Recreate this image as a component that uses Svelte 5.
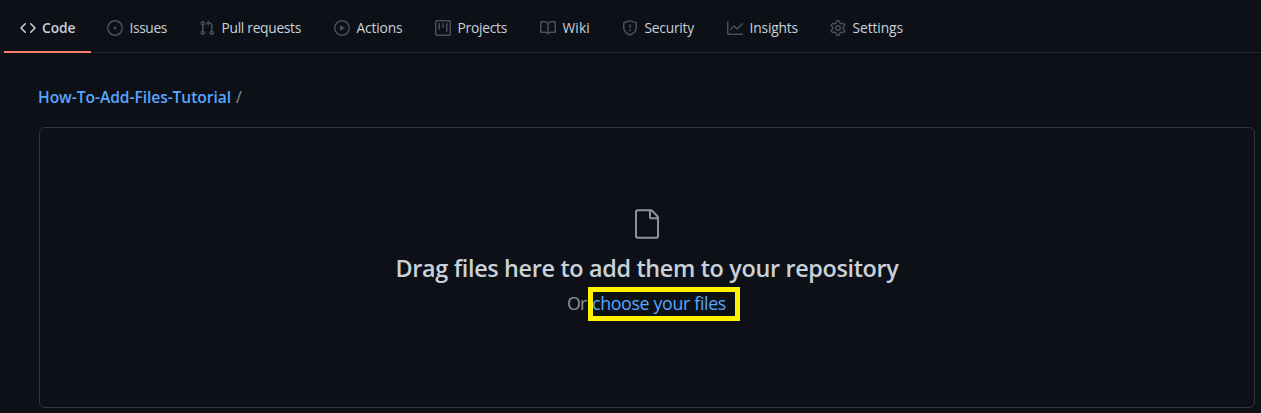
<script>
  const tabs = [
    { label: 'Code', width: 87, text: 33.5, active: true, paths: ['M4.72 3.22a.75.75 0 0 1 1.06 1.06L2.06 8l3.72 3.72a.75.75 0 1 1-1.06 1.06L.47 8.53a.75.75 0 0 1 0-1.06l4.25-4.25zm6.56 0a.75.75 0 1 0-1.06 1.06L13.94 8l-3.72 3.72a.75.75 0 1 0 1.06 1.06l4.25-4.25a.75.75 0 0 0 0-1.06l-4.25-4.25z'] },
    { label: 'Issues', width: 92, text: 37.5, paths: ['M8 9.5a1.5 1.5 0 1 0 0-3 1.5 1.5 0 0 0 0 3z', 'M8 0a8 8 0 1 0 0 16A8 8 0 0 0 8 0zM1.5 8a6.5 6.5 0 1 1 13 0 6.5 6.5 0 0 1-13 0z'] },
    { label: 'Pull requests', width: 135, text: 79.5, paths: ['M7.177 3.073L9.573.677A.25.25 0 0 1 10 .854v4.792a.25.25 0 0 1-.427.177L7.177 3.427a.25.25 0 0 1 0-.354zM3.75 2.5a.75.75 0 1 0 0 1.5.75.75 0 0 0 0-1.5zm-2.25.75a2.25 2.25 0 1 1 3 2.122v5.256a2.251 2.251 0 1 1-1.5 0V5.372A2.25 2.25 0 0 1 1.5 3.25zM11 2.5h-1V4h1a1 1 0 0 1 1 1v5.628a2.251 2.251 0 1 0 1.5 0V5A2.5 2.5 0 0 0 11 2.5zm1 10.25a.75.75 0 1 1 1.5 0 .75.75 0 0 1-1.5 0zM3.75 12a.75.75 0 1 0 0 1.5.75.75 0 0 0 0-1.5z'] },
    { label: 'Actions', width: 101, text: 46, paths: ['M1.5 8a6.5 6.5 0 1 1 13 0 6.5 6.5 0 0 1-13 0zM8 0a8 8 0 1 0 0 16A8 8 0 0 0 8 0zM6.379 5.227A.25.25 0 0 0 6 5.442v5.117a.25.25 0 0 0 .379.214l4.264-2.559a.25.25 0 0 0 0-.428L6.379 5.227z'] },
    { label: 'Projects', width: 105, text: 49.5, paths: ['M1.75 0A1.75 1.75 0 0 0 0 1.75v12.5C0 15.216.784 16 1.75 16h12.5A1.75 1.75 0 0 0 16 14.25V1.75A1.75 1.75 0 0 0 14.25 0H1.75zM1.5 1.75a.25.25 0 0 1 .25-.25h12.5a.25.25 0 0 1 .25.25v12.5a.25.25 0 0 1-.25.25H1.75a.25.25 0 0 1-.25-.25V1.75zM11.75 3a.75.75 0 0 0-.75.75v7.5a.75.75 0 0 0 1.5 0v-7.5a.75.75 0 0 0-.75-.75zm-8.25.75a.75.75 0 0 1 1.5 0v5.5a.75.75 0 0 1-1.5 0v-5.5zM8 3a.75.75 0 0 0-.75.75v3.5a.75.75 0 0 0 1.5 0v-3.5A.75.75 0 0 0 8 3z'] },
    { label: 'Wiki', width: 82, text: 27.5, paths: ['M0 1.75A.75.75 0 0 1 .75 1h4.253c1.227 0 2.317.59 3 1.501A3.744 3.744 0 0 1 11.006 1h4.245a.75.75 0 0 1 .75.75v10.5a.75.75 0 0 1-.75.75h-4.507a2.25 2.25 0 0 0-1.591.659l-.622.621a.75.75 0 0 1-1.06 0l-.622-.621A2.25 2.25 0 0 0 5.258 13H.75a.75.75 0 0 1-.75-.75V1.75zm8.755 3a2.25 2.25 0 0 1 2.25-2.25H14.5v9h-3.757c-.71 0-1.4.201-1.992.572l.004-7.322zm-1.504 7.324l.004-5.073-.002-2.253A2.25 2.25 0 0 0 5.003 2.5H1.5v9h3.757a3.75 3.75 0 0 1 1.994.574z'] },
    { label: 'Security', width: 105, text: 49.5, paths: ['M7.467.133a1.75 1.75 0 0 1 1.066 0l5.25 1.68A1.75 1.75 0 0 1 15 3.48V7c0 1.566-.32 3.182-1.303 4.682-.983 1.498-2.585 2.813-5.032 3.855a1.7 1.7 0 0 1-1.33 0c-2.447-1.042-4.049-2.357-5.032-3.855C1.32 10.182 1 8.566 1 7V3.48a1.75 1.75 0 0 1 1.217-1.667l5.25-1.68zm.61 1.429a.25.25 0 0 0-.153 0l-5.25 1.68a.25.25 0 0 0-.174.238V7c0 1.358.275 2.666 1.057 3.86.784 1.194 2.121 2.34 4.366 3.297a.2.2 0 0 0 .154 0c2.245-.956 3.582-2.104 4.366-3.298C13.225 9.666 13.5 8.36 13.5 7V3.48a.25.25 0 0 0-.174-.237l-5.25-1.68zM9 10.5a1 1 0 1 1-2 0 1 1 0 0 1 2 0zm-.25-5.75a.75.75 0 1 0-1.5 0v3a.75.75 0 0 0 1.5 0v-3z'] },
    { label: 'Insights', width: 103, text: 48.5, paths: ['M1.5 1.75a.75.75 0 0 0-1.5 0v12.5c0 .414.336.75.75.75h14.5a.75.75 0 0 0 0-1.5H1.5V1.75zm14.28 2.53a.75.75 0 0 0-1.06-1.06L10 7.94 7.53 5.47a.75.75 0 0 0-1.06 0L3.22 8.72a.75.75 0 0 0 1.06 1.06L7 7.06l2.47 2.47a.75.75 0 0 0 1.06 0l5.25-5.25z'] },
    { label: 'Settings', width: 106, text: 50.5, paths: ['M7.429 1.525a6.593 6.593 0 0 1 1.142 0c.036.003.108.036.137.146l.289 1.105c.147.56.55.967.997 1.189.174.086.341.183.501.29.417.278.97.423 1.53.27l1.102-.303c.11-.03.175.016.195.046.219.31.41.641.573.989.014.031.022.11-.059.19l-.815.806c-.411.406-.562.957-.53 1.456a4.588 4.588 0 0 1 0 .582c-.032.499.119 1.05.53 1.456l.815.806c.08.08.073.159.059.19a6.494 6.494 0 0 1-.573.99c-.02.029-.086.074-.195.045l-1.103-.303c-.559-.153-1.112-.008-1.529.27-.16.107-.327.204-.5.29-.449.222-.851.628-.998 1.189l-.289 1.105c-.029.11-.101.143-.137.146a6.613 6.613 0 0 1-1.142 0c-.036-.003-.108-.037-.137-.146l-.289-1.105c-.147-.56-.55-.967-.997-1.189a4.502 4.502 0 0 1-.501-.29c-.417-.278-.97-.423-1.53-.27l-1.102.303c-.11.03-.175-.016-.195-.046a6.492 6.492 0 0 1-.573-.989c-.014-.031-.022-.11.059-.19l.815-.806c.411-.406.562-.957.53-1.456a4.587 4.587 0 0 1 0-.582c.032-.499-.119-1.05-.53-1.456l-.815-.806c-.08-.08-.073-.159-.059-.19a6.44 6.44 0 0 1 .573-.99c.02-.029.086-.075.195-.045l1.103.303c.559.153 1.112.008 1.529-.27.16-.107.327-.204.5-.29.449-.222.851-.628.998-1.189l.289-1.105c.029-.11.101-.143.137-.146zM8 0c-.236 0-.47.01-.701.03-.743.065-1.29.615-1.458 1.261l-.29 1.106c-.017.066-.078.158-.211.224a5.994 5.994 0 0 0-.668.386c-.123.082-.233.09-.3.071L3.27 2.776c-.644-.177-1.392.02-1.82.63a7.977 7.977 0 0 0-.704 1.217c-.315.675-.111 1.422.363 1.891l.815.806c.05.048.098.147.088.294a6.084 6.084 0 0 0 0 .772c.01.147-.038.246-.088.294l-.815.806c-.474.469-.678 1.216-.363 1.891.2.428.436.835.704 1.218.428.609 1.176.806 1.82.63l1.103-.303c.066-.019.176-.011.299.071.213.143.436.272.668.386.133.066.194.158.212.224l.289 1.106c.169.646.715 1.196 1.458 1.26a8.094 8.094 0 0 0 1.402 0c.743-.064 1.29-.614 1.458-1.26l.29-1.106c.017-.066.078-.158.211-.224a5.98 5.98 0 0 0 .668-.386c.123-.082.233-.09.3-.071l1.102.302c.644.177 1.392-.02 1.82-.63.268-.382.505-.789.704-1.217.315-.675.111-1.422-.364-1.891l-.814-.806c-.05-.048-.098-.147-.088-.294a6.1 6.1 0 0 0 0-.772c-.01-.147.039-.246.088-.294l.814-.806c.475-.469.679-1.216.364-1.891a7.992 7.992 0 0 0-.704-1.218c-.428-.609-1.176-.806-1.82-.63l-1.103.303c-.066.019-.176.011-.299-.071a5.991 5.991 0 0 0-.668-.386c-.133-.066-.194-.158-.212-.224L10.16 1.29C9.99.645 9.444.095 8.701.031A8.094 8.094 0 0 0 8 0zm1.5 8a1.5 1.5 0 1 1-3 0 1.5 1.5 0 0 1 3 0zM11 8a3 3 0 1 1-6 0 3 3 0 0 1 6 0z'] }
  ];

  // Tracks a label so that it fills the given width.
  function track(node, width) {
    const natural = node.getBoundingClientRect().width;
    node.style.letterSpacing = (width - natural) / node.textContent.length + 'px';
  }
</script>

<div class="page">
  <nav>
    {#each tabs as tab}
      <a class="tab" class:active={tab.active} href="#top" style:width="{tab.width}px">
        <svg width="16" height="16" viewBox="0 0 16 16" fill-rule="evenodd" aria-hidden="true">
          {#each tab.paths as d}<path {d} />{/each}
        </svg>
        <span use:track={tab.text}>{tab.label}</span>
      </a>
    {/each}
  </nav>

  <main>
    <div class="crumbs">
      <a href="#top" use:track={193}>How-To-Add-Files-Tutorial</a><span class="slash">/</span>
    </div>
    <section class="drop">
      <svg width="32" height="32" viewBox="0 0 24 24" fill-rule="evenodd" aria-hidden="true">
        <path d="M5 2.5a.5.5 0 0 0-.5.5v18a.5.5 0 0 0 .5.5h14a.5.5 0 0 0 .5-.5V8.5h-4a2 2 0 0 1-2-2v-4H5zm10 0v4a.5.5 0 0 0 .5.5h4a.5.5 0 0 0-.146-.336l-4.018-4.018A.5.5 0 0 0 15 2.5zM3 3a2 2 0 0 1 2-2h9.982a2 2 0 0 1 1.414.586l4.018 4.018A2 2 0 0 1 21 7.018V21a2 2 0 0 1-2 2H5a2 2 0 0 1-2-2V3z" />
      </svg>
      <h1><span use:track={503}>Drag files here to add them to your repository</span></h1>
      <p><span class="or">Or</span><span class="choose"><a href="#top" use:track={134}>choose your files</a></span></p>
    </section>
  </main>
</div>

<style>
  :global(body) { background: #0d1117; }
  .page {
    box-sizing: border-box;
    height: 413px;
    background: #0d1117;
    color: #c9d1d9;
    font-family: "Open Sans", "Noto Sans", sans-serif;
    font-size: 13.8px;
    overflow: hidden;
  }
  a { color: #58a6ff; text-decoration: none; }
  span, a { white-space: nowrap; }
  nav {
    display: flex;
    box-sizing: border-box;
    height: 53px;
    padding-left: 4px;
    border-bottom: 1px solid #21262d;
  }
  .tab {
    flex: none;
    display: flex;
    align-items: center;
    gap: 6.5px;
    box-sizing: border-box;
    height: 53px;
    padding: 7px 0 2px 16px;
    border-bottom: 2px solid transparent;
    color: #c9d1d9;
  }
  .tab svg { flex: none; fill: #484f58; }
  .tab span { line-height: 20px; }
  .active { gap: 6px; border-color: #f78166; font-weight: 600; }
  .active svg { fill: #c9d1d9; }
  main { padding: 32px 6px 0 39px; }
  .crumbs {
    display: flex;
    gap: 5px;
    height: 42px;
    margin-left: -1px;
    line-height: 25px;
    font-size: 15.6px;
  }
  .crumbs a { font-weight: 600; }
  .slash { color: #8b949e; }
  .drop {
    display: flex;
    flex-direction: column;
    align-items: center;
    box-sizing: border-box;
    height: 281px;
    padding-top: 80px;
    border: 1px solid #30363d;
    border-radius: 6px;
  }
  .drop svg { flex: none; fill: #8b949e; }
  h1 {
    margin: 10px 0 0;
    font-size: 23.4px;
    line-height: 36px;
    font-weight: 600;
  }
  p {
    display: flex;
    align-items: center;
    margin: 1px 0 0 13px;
    font-size: 17.8px;
  }
  .or { width: 21px; margin-top: -2px; color: #8b949e; letter-spacing: -0.8px; }
  .choose {
    box-sizing: border-box;
    width: 152px;
    height: 34px;
    border: 5px solid #fff200;
    line-height: 23px;
  }
  .choose a { margin-left: -1px; }
</style>
